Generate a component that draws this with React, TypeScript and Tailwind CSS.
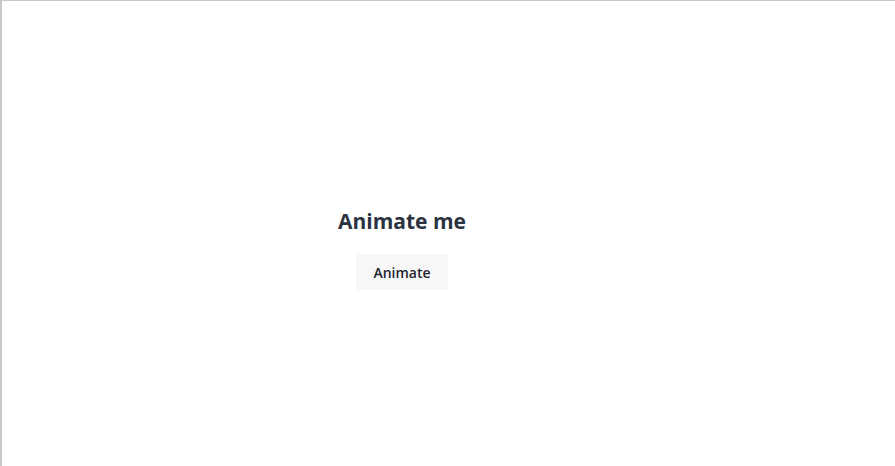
export default function App() {
  return (
    <div
      className="w-[895px] h-[466px] bg-white border-l-2 border-t border-[#c8c8c8] overflow-hidden"
      style={{ fontFamily: '"Open Sans", sans-serif' }}
    >
      <div className="flex flex-col items-center pt-[205px] pr-[93px]">
        <h1 className="text-[21px] leading-[31px] font-bold text-[#2a3441]">Animate me</h1>
        <button className="mt-[17px] h-[36px] px-[17px] bg-[#f7f7f7] rounded-[3px] text-[14px] font-semibold text-[#1e2530]">
          Animate
        </button>
      </div>
    </div>
  )
}
